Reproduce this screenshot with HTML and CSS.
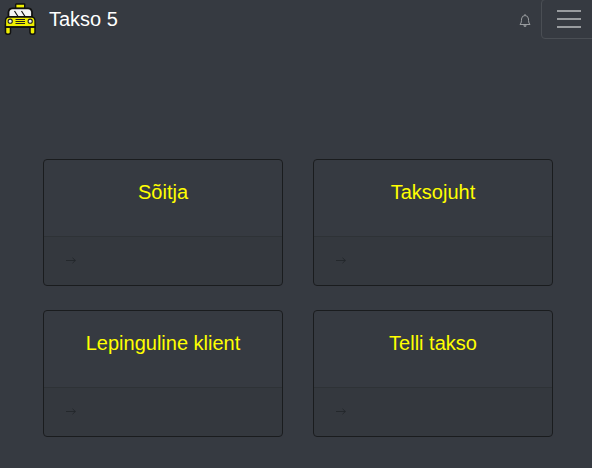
FILE: index.html
```
<!DOCTYPE html>
<html lang="et">
<head>
	<meta charset="UTF-8">
	<title>Takso 5</title>
	<link rel="stylesheet" href="styles.css">
</head>
<body>
	<nav class="navbar">
		<a class="brand" href="#">
			<svg class="logo" width="32" height="32" viewBox="0 0 32 32">
				<rect x="11.700" y="1" width="9" height="4.500" rx=".5" fill="#ee0" stroke="#111" stroke-width="1.400"/>
				<path d="M1.500 22h5v7.500q0 1.800-2.500 1.800t-2.500-1.800zM26 22h5v7.500q0 1.800-2.500 1.800t-2.500-1.800z" fill="#ee0" stroke="#111" stroke-width="1.500"/>
				<path d="M4.500 14V9Q5 5.300 8.500 5.300H24Q27.500 5.300 28 9V14Z" fill="#f4f4f4" stroke="#111" stroke-width="1.800"/>
				<path d="M10.500 8l3.500 5.500M17.500 8l3.500 5.500" stroke="#111" stroke-width="1.200"/>
				<path d="M4.500 14H28Q31 14.500 31 18V24H1.500V18Q1.500 14.500 4.500 14Z" fill="#ee0" stroke="#111" stroke-width="1.300"/>
				<circle cx="6.200" cy="18.200" r="2.100" fill="#eee" stroke="#222" stroke-width="1.100"/>
				<circle cx="26.200" cy="18.200" r="2.100" fill="#eee" stroke="#222" stroke-width="1.100"/>
				<path d="M11.500 16.500h9.500M11.500 18.500h9.500M11.500 20.500h9.500" stroke="#222" stroke-width="1"/>
				<path d="M1.500 24h29.500" stroke="#111" stroke-width="1.500"/>
			</svg>
			<span>Takso 5</span>
		</a>
		<a class="bell" href="#">
			<svg width="12" height="13" viewBox="0 0 12 13">
				<path d="M6 0V1.500M1 10.500H11Q9.700 9.500 9.500 6.500V5Q9.200 1.500 6 1.500Q2.800 1.500 2.500 5V6.500Q2.300 9.500 1 10.500Z" fill="none" stroke="#999c9f" stroke-width="1"/>
				<path d="M4.300 11.300h3.400q-.3 1.700-1.700 1.700t-1.700-1.700z" fill="#999c9f"/>
			</svg>
		</a>
		<button class="toggler" type="button">
			<svg width="30" height="30" viewBox="0 0 30 30">
				<path d="M3 7h24M3 15h24M3 23h24" stroke="#999c9f" stroke-width="2"/>
			</svg>
		</button>
	</nav>
	<div class="cards">
		<div class="card">
			<h5 class="title">Sõitja</h5>
			<div class="footer"><svg class="arrow" viewBox="0 0 12 8"><path d="M1 3.500h9.500M7.500 .8l2.800 2.700-2.800 2.700"/></svg></div>
		</div>
		<div class="card">
			<h5 class="title">Taksojuht</h5>
			<div class="footer"><svg class="arrow" viewBox="0 0 12 8"><path d="M1 3.500h9.500M7.500 .8l2.800 2.700-2.800 2.700"/></svg></div>
		</div>
		<div class="card">
			<h5 class="title">Lepinguline klient</h5>
			<div class="footer"><svg class="arrow" viewBox="0 0 12 8"><path d="M1 3.500h9.500M7.500 .8l2.800 2.700-2.800 2.700"/></svg></div>
		</div>
		<div class="card">
			<h5 class="title">Telli takso</h5>
			<div class="footer"><svg class="arrow" viewBox="0 0 12 8"><path d="M1 3.500h9.500M7.500 .8l2.800 2.700-2.800 2.700"/></svg></div>
		</div>
	</div>
</body>
</html>
```
FILE: styles.css
```
*{
	box-sizing: border-box;
}
body{
	margin: 0;
	height: 468px;
	overflow: hidden;
	background: #363a41;
	font: 16px/24px "Liberation Sans", Arial, sans-serif;
}
a{
	text-decoration: none;
}
svg{
	display: block;
}

/* navbar */
.navbar{
	display: flex;
	align-items: center;
	height: 40px;
	margin: -1px -5px 0 0;
}
.brand{
	display: flex;
	align-items: center;
	flex: 1;
	padding-left: 4px;
	color: #fff;
	font-size: 20px;
	line-height: 30px;
}
.logo{
	margin-right: 13px;
}
.bell{
	margin: 2px 10px 0 0;
}
.toggler{
	width: 56px;
	height: 40px;
	padding: 4px 12px;
	background: transparent;
	border: 1px solid #4a4e54;
	border-radius: 4px;
}

/* cards */
.cards{
	display: grid;
	grid-template-columns: 240px 240px;
	gap: 24px 30px;
	margin: 120px 0 0 43px;
}
.card{
	height: 127px;
	border: 1px solid #1a1c1e;
	border-radius: 4px;
	overflow: hidden;
}
.title{
	height: 76px;
	margin: 0;
	padding-top: 20px;
	color: #ff0;
	font-size: 20px;
	font-weight: normal;
	line-height: 24px;
	text-align: center;
}
.footer{
	height: 49px;
	padding: 20px 21px;
	background: rgba(0,0,0,.03);
	border-top: 1px solid #2e3236;
}
.arrow{
	width: 12px;
	height: 8px;
	fill: none;
	stroke: #24282c;
	stroke-width: 1;
}
```
